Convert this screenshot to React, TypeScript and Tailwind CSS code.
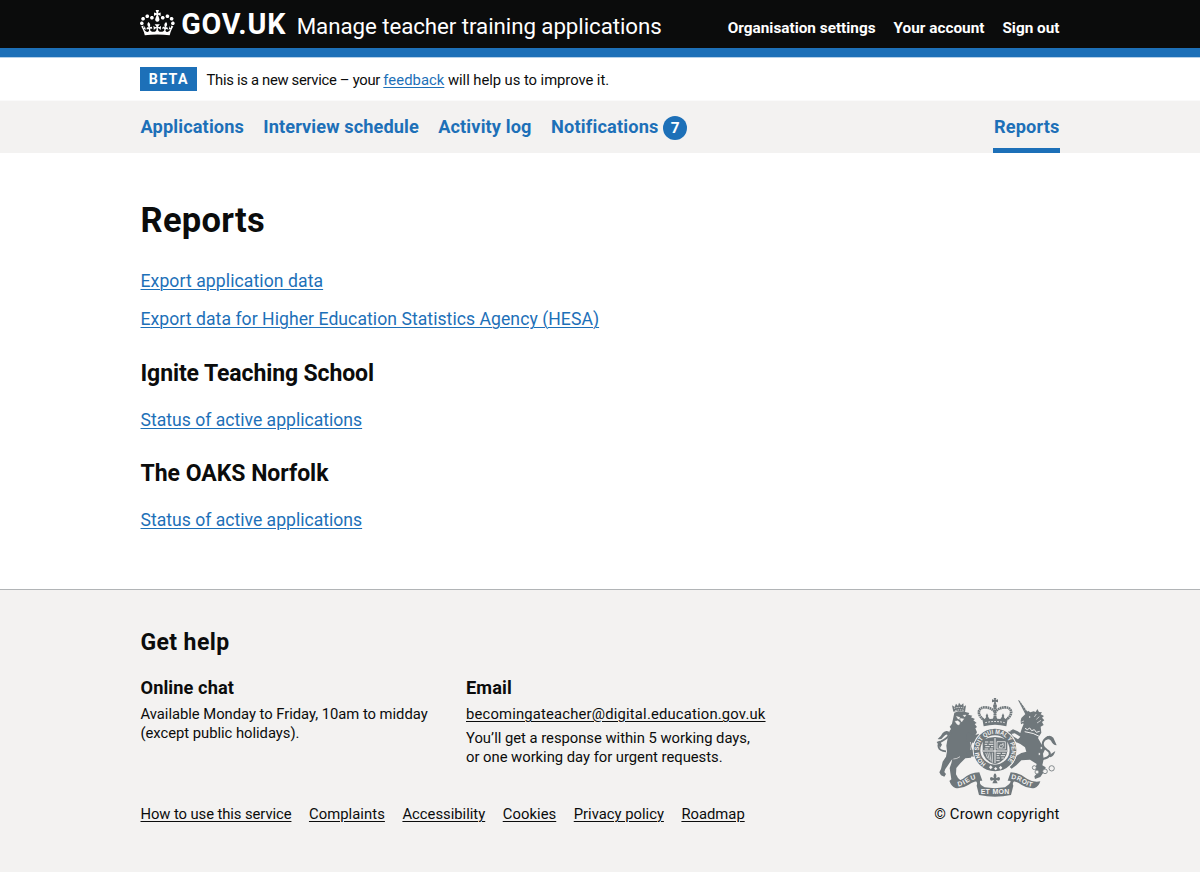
import type { ReactNode } from "react";

const CROWN_PATH =
  "M25 30.2c3.5 1.5 7.7-.2 9.1-3.7 1.5-3.6-.2-7.8-3.9-9.2-3.6-1.4-7.6.3-9.1 3.9-1.4 3.5.3 7.5 3.9 9zM9 39.5c3.6 1.5 7.8-.2 9.2-3.7 1.5-3.6-.2-7.8-3.9-9.1-3.6-1.5-7.6.2-9.1 3.8-1.4 3.5.3 7.5 3.8 9zM4.4 57.2c3.5 1.5 7.7-.2 9.1-3.8 1.5-3.6-.2-7.7-3.9-9.1-3.5-1.5-7.6.3-9.1 3.8-1.4 3.5.3 7.6 3.9 9.1zm38.3-21.4c3.5 1.5 7.7-.2 9.1-3.8 1.5-3.6-.2-7.7-3.9-9.1-3.6-1.5-7.6.3-9.1 3.8-1.3 3.6.4 7.7 3.9 9.1zm64.4-5.6c-3.6 1.5-7.8-.2-9.1-3.7-1.5-3.6.2-7.8 3.8-9.2 3.6-1.4 7.7.3 9.2 3.9 1.3 3.5-.4 7.5-3.9 9zm15.9 9.3c-3.6 1.5-7.7-.2-9.1-3.7-1.5-3.6.2-7.8 3.7-9.1 3.6-1.5 7.7.2 9.2 3.8 1.5 3.5-.3 7.5-3.8 9zm4.7 17.7c-3.6 1.5-7.8-.2-9.2-3.8-1.5-3.6.2-7.7 3.9-9.1 3.6-1.5 7.7.3 9.2 3.8 1.3 3.5-.4 7.6-3.9 9.1zM89.3 35.8c-3.6 1.5-7.8-.2-9.2-3.8-1.4-3.6.2-7.7 3.9-9.1 3.6-1.5 7.7.3 9.2 3.8 1.4 3.6-.3 7.7-3.9 9.1zM69.7 17.7l8.9 4.7V9.3l-8.9 2.8c-.2-.3-.5-.6-.9-.9L72.4 0H59.6l3.5 11.2c-.3.3-.6.5-.9.9l-8.8-2.8v13.1l8.8-4.7c.3.3.6.7.9.9l-5 15.4v.1c-.2.8-.4 1.6-.4 2.4 0 4.1 3.1 7.5 7 8.1h.2c.3 0 .7.1 1 .1.4 0 .7 0 1-.1h.2c4-.6 7.1-4.1 7.1-8.1 0-.8-.1-1.7-.4-2.4V34l-5.1-15.4c.4-.2.7-.6 1-.9zM66 92.8c16.9 0 32.8 1.1 47.1 3.2 4-16.9 8.9-26.7 14-33.5l-9.6-3.4c1 4.9 1.1 7.2 0 10.2-1.5-1.4-3-4.3-4.2-8.7L108.6 76c2.8-2 5-3.2 7.5-3.3-4.4 9.4-10 11.9-13.6 11.2-4.3-.8-6.3-4.6-5.6-7.9 1-4.7 5.7-5.9 8-.5 4.3-8.7-3-11.4-7.6-8.8 7.1-7.2 7.9-13.5 2.1-21.1-8 6.1-8.1 12.3-4.5 20.8-4.7-5.4-12.1-2.5-9.5 6.2 3.4-5.2 7.9-2 7.2 3.1-.6 4.3-6.4 7.8-13.5 7.2-10.3-.9-10.9-8-11.2-13.8 2.5-.5 7.1 1.8 11 7.3L80.2 60c-4.1 4.4-8 5.3-12.3 5.4 1.4-4.4 8-11.6 8-11.6H55.5s6.4 7.2 7.9 11.6c-4.2-.1-8-1-12.3-5.4l1.4 16.4c3.9-5.5 8.5-7.7 10.9-7.3-.3 5.8-.9 12.8-11.1 13.8-7.2.6-12.9-2.9-13.5-7.2-.7-5 3.8-8.3 7.1-3.1 2.7-8.7-4.6-11.6-9.4-6.2 3.7-8.5 3.6-14.7-4.6-20.8-5.8 7.6-5 13.9 2.2 21.1-4.7-2.6-11.9.1-7.7 8.8 2.3-5.5 7.1-4.2 8.1.5.7 3.3-1.3 7.1-5.7 7.9-3.5.7-9-1.8-13.5-11.2 2.5.1 4.7 1.3 7.5 3.3l-4.7-15.4c-1.2 4.4-2.7 7.2-4.3 8.7-1.1-3-.9-5.3 0-10.2l-9.5 3.4c5 6.9 9.9 16.7 14 33.5 14.8-2.1 30.8-3.2 47.7-3.2z";

const INK = "#6f777b";
const PAPER = "#f3f2f1";

function CoatOfArms() {
  return (
    <svg viewBox="50 35 366 300" className="h-[100px] w-[122px]" fill={INK} aria-label="Royal coat of arms">
      {/* imperial crown */}
      <path d="M223 38h8l-2 6 7-2v9l-7-2 2 8h-8l2-8-7 2v-9l7 2z" />
      <circle cx="227" cy="62" r="6" />
      <g fill="none" stroke={INK}>
        <path
          d="M191 102C170 84 178 65 198 66c14 1 25 8 29 14 4-6 15-13 29-14 20-1 28 18 7 36"
          strokeWidth="8"
          strokeDasharray="5 1.5"
        />
        <path d="M227 66v38" strokeWidth="9" strokeDasharray="5 1.5" />
      </g>
      <path d="M188 96l8 5 8-10 7 10 9-1 7-10 7 10 9 1 7-10 8 10 8-5-5 27q-34-9-68 0z" />
      <path d="M198 112q29-7 58 0" fill="none" stroke={PAPER} strokeWidth="3" strokeDasharray="5 4" />
      <path d="M203 84l4 8-4 7-4-7zM251 84l4 8-4 7-4-7z" />

      {/* lion */}
      <path d="M102 79l-4-19 8 5 4-10 6 7 3-10 6 8 7-6 1 10 7-4-3 20q-17-5-35-1z" />
      <path d="M104 69q15-5 30-1M108 76q12-4 25-1" fill="none" stroke={PAPER} strokeWidth="2.6" strokeDasharray="4 3" />
      <path d="M105 82l12-4 18 1 15 4-3 5 12 3-4 5 12 5-5 4 10 8-6 3 7 9-5 4 5 12-8 14-3 6-6 22 4 14-5 20-17 2-15 15-12 14-1 19 6 11 9 8-1 7-29 0-5-6 6-5-3-20-2-14 5-14 3-13-6 8-8 12-7 10-3 9 5 6-5 8-10-4-5-9 5-10 5-22 10-15 3-16-2-17 4-22 8-13-3-8 5-7-4-7 7-9z" />
      <path
        d="M111 93l10 3 4 6-9-1zM131 90l9-1-4 6zM107 108l9-2 6 6-3 7-6-2zM119 98l8 12 7-10"
        fill={PAPER}
        stroke={PAPER}
        strokeWidth="1"
      />
      <path d="M80 198C54 197 52 177 66 168c17-9 30-17 14-29" fill="none" stroke={INK} strokeWidth="5.5" />
      <path d="M97 146Q84 129 70 143Q66 152 55 161Q66 165 74 153Q82 143 90 152zM52 170l9-4 7 12-6 10q-4-10-10-18z" />
      <path d="M144 140l22 10 13-5 1 9-9 6-7 12-25-3zM142 200l24-9 12 11-8 12-26-1z" />
      <path d="M153 170q5 10 1 24M122 214q-9 7-20 7" fill="none" stroke={PAPER} strokeWidth="2" />

      {/* unicorn */}
      <path d="M296 44l5 2 26 37-9 4z" />
      <path d="M302 51l4-2M307 59l5-3M312 67l4-2M316 75l4-3" stroke={PAPER} strokeWidth="1.5" />
      <path d="M304 106L306 98L319 85L326 76L333 81L343 78L349 80L354 71L359 80L368 81L364 87L374 92L368 97L375 105L368 110L373 119L364 124L366 142L356 158L366 176L378 190L371 205L373 222L369 240L379 246L376 256L363 275L347 281L345 273L355 262L347 251L352 236L332 223L306 225L291 240L277 250L271 245L282 232L292 211L306 203L321 199L317 186L303 176L287 169L272 163L264 151L262 142L269 138L276 142L280 152L296 162L303 154L286 144L276 146L272 137L281 132L295 138L303 143L308 128L313 116L311 114L305 117Z" />
      <path d="M316 139q27 3 48 16M317 129l7 4 7-5 6 8 8-3 6 8 10-3" fill="none" stroke={PAPER} strokeWidth="3" />
      <circle cx="331" cy="95" r="2.2" fill={PAPER} />
      <path d="M351 86l-6 9M360 94l-9 8M365 105l-12 8M306 110l8-3" stroke={PAPER} strokeWidth="2" />
      <path d="M370 221c26-5 26-19 13-27-18-12-17-28 4-39" fill="none" stroke={INK} strokeWidth="6" />
      <path d="M376 160Q388 144 402 157Q408 170 412 180Q400 178 395 166Q390 158 380 164zM386 212L408 197Q404 213 393 216z" />

      {/* chain */}
      <g fill={PAPER} stroke={INK} strokeWidth="2.5">
        <circle cx="366" cy="188" r="4" />
        <circle cx="360" cy="206" r="4" />
        <circle cx="345" cy="247" r="6" />
        <circle cx="353" cy="260" r="6" />
        <circle cx="377" cy="258" r="7" />
        <circle cx="397" cy="249" r="8" />
      </g>

      {/* garter */}
      <circle cx="227" cy="194" r="67" fill={PAPER} />
      <circle cx="227" cy="194" r="54" fill="none" stroke={INK} strokeWidth="20" />
      <path id="garter-ring" d="M200 235a49 49 0 1 1 55 0" fill="none" />
      <text fill={PAPER} className="font-['Liberation_Sans'] text-[19px] font-bold">
        <textPath href="#garter-ring" textLength="236" lengthAdjust="spacingAndGlyphs">
          HONI SOIT QUI MAL Y PENSE
        </textPath>
      </text>
      <path d="M209 246l5-6 6 6-6 6zM224 250l5-5 5 5-5 5zM239 247l5-6 5 6-5 6z" fill={PAPER} />

      {/* quartered shield */}
      <path d="M190 164q37-18 74 0v34q-3 29-37 39-34-10-37-39z" />
      <path d="M227 158v76M191 197h72" stroke={PAPER} strokeWidth="3" />
      <path
        d="M197 170h10m4 0h11M196 177h8m4 0h14M198 184h13m4 0h7M196 191h11m4 0h10M232 204h12m4 0h11M232 211h8m4 0h13M232 218h10m4 0h8M231 226h10"
        stroke={PAPER}
        strokeWidth="2.8"
      />
      <path
        d="M233 169h25v22h-25zM239 186l4-8 5 1 3-5 1 8-5 6zM199 203l6 16m0-17l5 22m1-22l4 26m4-26v30"
        fill="none"
        stroke={PAPER}
        strokeWidth="2.2"
      />

      {/* thistle and scroll */}
      <path d="M227 264q7 6 3 14l9-3q6 5 0 11l-9-2 5 10h-16l5-10-9 2q-6-6 0-11l9 3q-4-8 3-14z" />
      <path d="M91 288Q112 292 130 281Q152 262 180 261L189 286Q165 285 148 298Q128 311 108 308Q96 304 91 288z" />
      <path d="M363 288Q342 292 324 281Q302 262 274 261L265 286Q289 285 306 298Q326 311 346 308Q358 304 363 288z" />
      <path d="M182 281q-18 1-9 11 1 4-1 9l7 28q48 10 96 0l7-28q-3-5 0-10 8-9-12-11 8 8-1 17l-12 9q-31 5-61 0-16-8-14-15z" />
      <path id="scroll-left" d="M111 304Q130 303 146 291Q162 280 184 280" fill="none" />
      <path id="scroll-right" d="M271 280Q292 281 308 292Q324 304 342 305" fill="none" />
      <g fill={PAPER} className="font-['Liberation_Sans'] text-[20px] font-bold">
        <text>
          <textPath href="#scroll-left" startOffset="6" textLength="58">DIEU</textPath>
        </text>
        <text>
          <textPath href="#scroll-right" startOffset="4" textLength="68">DROIT</textPath>
        </text>
        <text x="227" y="327" textAnchor="middle" textLength="86" className="text-[21px]">
          ET MON
        </text>
      </g>
    </svg>
  );
}

function Container({ className = "", children }: { className?: string; children: ReactNode }) {
  return <div className={`mx-auto w-[919px] ${className}`}>{children}</div>;
}

function Link({ className = "", children }: { className?: string; children: ReactNode }) {
  return (
    <a href="#" className={`underline decoration-1 underline-offset-[1.5px] ${className}`}>
      {children}
    </a>
  );
}

function ReportSection({ title, tracking }: { title: string; tracking: string }) {
  return (
    <section className="mt-[28.5px]">
      <h2 className={`text-[23px] leading-7 font-bold ${tracking}`}>{title}</h2>
      <p className="mt-5 text-[17.6px] leading-6 text-[#1d70b8]">
        <Link>Status of active applications</Link>
      </p>
    </section>
  );
}

export default function App() {
  return (
    <div className="min-h-[872px] bg-white font-['Roboto',sans-serif] whitespace-nowrap text-[#0b0c0c]">
      <header className="border-b-[9px] border-[#1d70b8] bg-[#0b0c0c] text-white">
        <Container className="flex h-12 items-center">
          <svg viewBox="0 0 132 97" className="-mt-[2px] -ml-[0.5px] h-[25.5px] w-[34.7px]" fill="currentColor">
            <path fillRule="evenodd" d={CROWN_PATH} />
          </svg>
          <span className="ml-[6.5px] text-[28.7px] leading-8 font-bold tracking-[0.8px]">GOV.UK</span>
          <span className="mt-1 ml-[10.5px] text-[22.3px] leading-7 tracking-[-0.06px]">
            Manage teacher training applications
          </span>
          <nav className="mt-2 ml-auto flex gap-[18px] text-[15.33px] leading-5 font-bold">
            <a href="#">Organisation settings</a>
            <a href="#">Your account</a>
            <a href="#">Sign out</a>
          </nav>
        </Container>
      </header>

      <div className="border-t border-b border-t-[#b4d0e9] border-b-[#fafafa]">
        <Container className="flex h-[42px] items-center text-[14.8px] leading-5">
          <strong className="mr-[9.7px] -ml-[0.7px] flex h-6 w-[57px] items-center justify-center bg-[#1d70b8] pl-px text-[14.2px] tracking-[1.3px] text-white">
            BETA
          </strong>
          <p className="pt-px">
            <span className="tracking-[-0.3px]">This is a new service – your </span>
            <Link className="tracking-[0.05px] text-[#1d70b8]">feedback</Link>
            <span className="tracking-[-0.05px]"> will help us to improve it.</span>
          </p>
        </Container>
      </div>

      <nav className="bg-[#f3f2f1]">
        <Container className="flex h-[52px] items-stretch gap-[19.3px] text-[18.2px] leading-[52px] font-bold text-[#1d70b8]">
          <a href="#" className="tracking-[0.125px]">Applications</a>
          <a href="#" className="tracking-[0.09px]">Interview schedule</a>
          <a href="#" className="tracking-[0.126px]">Activity log</a>
          <a href="#" className="flex items-center tracking-[0.18px]">
            Notifications
            <span className="mt-[2px] ml-[4.5px] flex size-6 items-center justify-center rounded-full bg-[#1d70b8] text-[15.33px] leading-6 tracking-normal text-white">
              7
            </span>
          </a>
          <a href="#" className="ml-auto border-b-[5px] border-[#1d70b8] pl-[0.7px] tracking-[0.13px]">
            Reports
          </a>
        </Container>
      </nav>

      <main>
        <Container className="h-[436px] pt-[47px]">
          <h1 className="text-[34.5px] leading-10 font-bold tracking-[0.29px]">Reports</h1>
          <p className="mt-[29px] text-[17.6px] leading-6 text-[#1d70b8]">
            <Link className="tracking-[0.08px]">Export application data</Link>
          </p>
          <p className="mt-[14px] text-[17.6px] leading-6 text-[#1d70b8]">
            <Link className="tracking-[0.05px]">Export data for Higher Education Statistics Agency (HESA)</Link>
          </p>
          <ReportSection title="Ignite Teaching School" tracking="tracking-[-0.11px]" />
          <ReportSection title="The OAKS Norfolk" tracking="tracking-[-0.02px]" />
        </Container>
      </main>

      <footer className="h-[283px] border-t border-[#b1b4b6] bg-[#f3f2f1]">
        <Container className="flex justify-between pt-[39px] text-[14.8px] leading-[19.2px]">
          <div>
            <h2 className="text-[23px] leading-7 font-bold tracking-[0.38px]">Get help</h2>
            <div className="mt-[19px] flex">
              <section className="w-[325.5px]">
                <h3 className="mb-[5px] text-[18.2px] leading-6 font-bold tracking-[0.1px]">Online chat</h3>
                <p className="tracking-[-0.03px]">
                  Available Monday to Friday, 10am to midday
                  <br />
                  (except public holidays).
                </p>
              </section>
              <section>
                <h3 className="mb-[5px] text-[18.2px] leading-6 font-bold tracking-[0.13px]">Email</h3>
                <p>
                  <Link className="tracking-[0.18px]">becomingateacher@digital.education.gov.uk</Link>
                </p>
                <p className="mt-[5px] tracking-[-0.02px]">
                  You’ll get a response within 5 working days,
                  <br />
                  or one working day for urgent requests.
                </p>
              </section>
            </div>
            <div className="mt-[37.5px] flex gap-[17.5px]">
              <Link className="tracking-[-0.08px]">How to use this service</Link>
              <Link className="tracking-[0.07px]">Complaints</Link>
              <Link>Accessibility</Link>
              <Link className="tracking-[0.06px]">Cookies</Link>
              <Link>Privacy policy</Link>
              <Link>Roadmap</Link>
            </div>
          </div>
          <div className="flex flex-col items-center justify-end">
            <CoatOfArms />
            <p className="mt-2 tracking-[0.16px]">© Crown copyright</p>
          </div>
        </Container>
      </footer>
    </div>
  );
}
